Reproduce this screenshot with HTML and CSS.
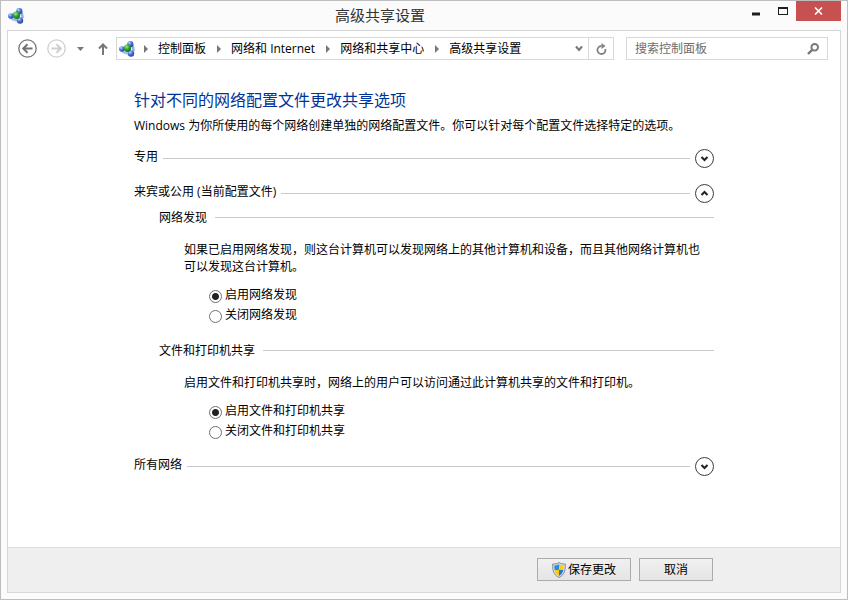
FILE: index.html
```html
<!DOCTYPE html>
<html lang="zh-CN">
<head>
<meta charset="utf-8">
<meta name="viewport" content="width=device-width, initial-scale=1">
<title>高级共享设置</title>
<link rel="stylesheet" href="styles.css">
</head>
<body>
<svg class="defs" aria-hidden="true">
  <defs>
    <radialGradient id="blue" cx=".35" cy=".28" r=".8">
      <stop offset="0" stop-color="#c4d8fb"/>
      <stop offset=".45" stop-color="#4d76dc"/>
      <stop offset="1" stop-color="#1f3aa8"/>
    </radialGradient>
    <radialGradient id="green" cx=".38" cy=".3" r=".8">
      <stop offset="0" stop-color="#a6eb92"/>
      <stop offset=".45" stop-color="#2da52c"/>
      <stop offset="1" stop-color="#0a6a12"/>
    </radialGradient>
    <symbol id="network" viewBox="0 0 16 16">
      <path d="M2.500 8 8 7.500M11 3 9 7M12 12.500 9 8" stroke="#9fb4dd" stroke-width="2"/>
      <path d="M12.500 3.500q2.300 2 2 6.500" fill="none" stroke="#8fade6" stroke-width="2.500"/>
      <path d="M3 9.500q1.500 2.700 6 2.700" fill="none" stroke="#a3bdec" stroke-width="2.500"/>
      <circle cx="11.300" cy="3.200" r="3.100" fill="url(#blue)"/>
      <circle cx="2.900" cy="8" r="2.800" fill="url(#blue)"/>
      <circle cx="12" cy="12.500" r="3.200" fill="url(#blue)"/>
      <circle cx="8.500" cy="7.300" r="3.700" fill="url(#green)"/>
    </symbol>
    <symbol id="chevron" viewBox="0 0 19 19">
      <circle cx="9.500" cy="9.500" r="9" fill="#fff" stroke="#3c3c3c"/>
      <path d="M6.500 8l3 3 3-3" fill="none" stroke="#222" stroke-width="2"/>
    </symbol>
  </defs>
</svg>

<div class="window">
  <header class="titlebar">
    <svg class="app-icon" aria-hidden="true"><use href="#network"/></svg>
    <h1 class="title">高级共享设置</h1>
    <div class="controls">
      <button type="button" class="control" aria-label="最小化">
        <svg width="11" height="10" viewBox="0 0 11 10"><path d="M2 6.500h8v3H2z" fill="#1e1e1e"/></svg>
      </button>
      <button type="button" class="control" aria-label="最大化">
        <svg width="11" height="10" viewBox="0 0 11 10"><path fill-rule="evenodd" d="M1 1h10v8H1zM2 3v5h8V3z" fill="#1e1e1e"/></svg>
      </button>
      <button type="button" class="control close" aria-label="关闭">
        <svg width="9" height="8" viewBox="0 0 9 8"><path d="M1 .5l7 7M8 .5l-7 7" stroke="#fff" stroke-width="1.600"/></svg>
      </button>
    </div>
  </header>

  <div class="frame">
    <div class="toolbar">
      <div class="history">
        <button type="button" class="tool" aria-label="后退">
          <svg width="19" height="19" viewBox="0 0 19 19" fill="none" stroke="#747474"><circle cx="9.500" cy="9.500" r="8.700" stroke-width="1.300"/><path d="M14.500 9.500H5.500M9.500 5.200 5.200 9.500l4.300 4.300" stroke-width="2"/></svg>
        </button>
        <button type="button" class="tool" aria-label="前进">
          <svg width="19" height="19" viewBox="0 0 19 19" fill="none" stroke="#cfcfcf"><circle cx="9.500" cy="9.500" r="8.700" stroke-width="1.300"/><path d="M4.500 9.500h9M9.500 5.200l4.300 4.300-4.300 4.300" stroke-width="2"/></svg>
        </button>
        <button type="button" class="tool recent" aria-label="最近位置">
          <svg width="7" height="4" viewBox="0 0 7 4"><path d="M0 0h7L3.500 4z" fill="#777"/></svg>
        </button>
        <button type="button" class="tool" aria-label="上移">
          <svg width="10" height="12" viewBox="0 0 10 12" fill="none" stroke="#777" stroke-width="2"><path d="M5 12V2M1 5.500l4-4 4 4"/></svg>
        </button>
      </div>
      <div class="address">
        <nav class="crumbs" aria-label="地址">
          <svg class="app-icon" aria-hidden="true"><use href="#network"/></svg>
          <svg class="arrow" viewBox="0 0 4 8"><path d="M0 0v8l4-4z"/></svg>
          <a href="#">控制面板</a>
          <svg class="arrow" viewBox="0 0 4 8"><path d="M0 0v8l4-4z"/></svg>
          <a href="#">网络和 Internet</a>
          <svg class="arrow" viewBox="0 0 4 8"><path d="M0 0v8l4-4z"/></svg>
          <a href="#">网络和共享中心</a>
          <svg class="arrow" viewBox="0 0 4 8"><path d="M0 0v8l4-4z"/></svg>
          <a href="#">高级共享设置</a>
        </nav>
        <button type="button" class="tool history-list" aria-label="以前的位置">
          <svg width="8" height="7" viewBox="0 0 8 7"><path d="M1 1.500l3 3.500 3-3.500" fill="none" stroke="#777" stroke-width="2"/></svg>
        </button>
        <button type="button" class="tool refresh" aria-label="刷新">
          <svg width="11" height="12" viewBox="0 0 11 12"><path d="M5.500 3A4 4 0 1 0 9.300 6" fill="none" stroke="#808080" stroke-width="1.800"/><path d="M5.500 0 9.500 3 5.500 6z" fill="#808080"/></svg>
        </button>
      </div>
      <form class="search">
        <input type="search" placeholder="搜索控制面板" aria-label="搜索控制面板">
        <button type="submit" class="tool" aria-label="搜索">
          <svg width="12" height="12" viewBox="0 0 12 12" fill="none" stroke="#777"><circle cx="7.700" cy="4.300" r="3.300" stroke-width="1.900"/><path d="M5.200 6.800 1 11" stroke-width="2.400"/></svg>
        </button>
      </form>
    </div>

    <main class="content">
      <h2 class="heading">针对不同的网络配置文件更改共享选项</h2>
      <p class="intro">Windows 为你所使用的每个网络创建单独的网络配置文件。你可以针对每个配置文件选择特定的选项。</p>

      <section class="profile">
        <div class="profile-head">
          <h3>专用</h3><span class="rule"></span>
          <button type="button" class="toggle" aria-label="展开 专用" aria-expanded="false"><svg><use href="#chevron"/></svg></button>
        </div>
      </section>

      <section class="profile">
        <div class="profile-head">
          <h3>来宾或公用 (当前配置文件)</h3><span class="rule"></span>
          <button type="button" class="toggle open" aria-label="折叠 来宾或公用" aria-expanded="true"><svg><use href="#chevron"/></svg></button>
        </div>
        <div class="group" role="radiogroup" aria-labelledby="discovery">
          <div class="group-head"><h4 id="discovery">网络发现</h4><span class="rule"></span></div>
          <p>如果已启用网络发现，则这台计算机可以发现网络上的其他计算机和设备，而且其他网络计算机也可以发现这台计算机。</p>
          <div class="options">
            <label><input type="radio" name="discovery" checked><span>启用网络发现</span></label>
            <label><input type="radio" name="discovery"><span>关闭网络发现</span></label>
          </div>
        </div>
        <div class="group" role="radiogroup" aria-labelledby="sharing">
          <div class="group-head"><h4 id="sharing">文件和打印机共享</h4><span class="rule"></span></div>
          <p>启用文件和打印机共享时，网络上的用户可以访问通过此计算机共享的文件和打印机。</p>
          <div class="options">
            <label><input type="radio" name="sharing" checked><span>启用文件和打印机共享</span></label>
            <label><input type="radio" name="sharing"><span>关闭文件和打印机共享</span></label>
          </div>
        </div>
      </section>

      <section class="profile">
        <div class="profile-head">
          <h3>所有网络</h3><span class="rule"></span>
          <button type="button" class="toggle" aria-label="展开 所有网络" aria-expanded="false"><svg><use href="#chevron"/></svg></button>
        </div>
      </section>
    </main>

    <footer class="actions">
      <button type="button" class="button save">
        <svg width="14" height="16" viewBox="0 0 14 16">
          <path d="M7 .5C5.500 1.700 3 2 .7 2 .3 8 1.500 13 7 15.500 12.500 13 13.700 8 13.300 2 11 2 8.500 1.700 7 .5z" fill="#d5d8dc" stroke="#8b8f94"/>
          <path d="M7 2.200C5.500 3 4 3.400 2.400 3.500 2.300 5 2.300 6.500 2.700 8H7z" fill="#2a8be0"/>
          <path d="M7 2.200c1.500.8 3 1.200 4.600 1.300.1 1.500.1 3-.3 4.500H7z" fill="#f8d117"/>
          <path d="M2.700 8C3.200 10.500 4.500 12.500 7 14V8z" fill="#f8c90f"/>
          <path d="M11.300 8C10.800 10.500 9.500 12.500 7 14V8z" fill="#2379d2"/>
        </svg>
        保存更改
      </button>
      <button type="button" class="button cancel">取消</button>
    </footer>
  </div>
</div>
</body>
</html>
```
FILE: styles.css
```css
* {
  box-sizing: border-box;
}

body {
  margin: 0;
  color: #000;
  font: 12px/17px "Open Sans", "Noto Sans CJK SC", sans-serif;
}

h1, h2, h3, h4, p {
  margin: 0;
  font-size: inherit;
  font-weight: normal;
}

button, input {
  font: inherit;
  color: inherit;
}

button {
  padding: 0;
  border: 0;
  background: none;
}

svg {
  display: block;
  flex: none;
}

.defs {
  position: absolute;
  width: 0;
  height: 0;
}

.window {
  display: flex;
  flex-direction: column;
  min-height: 100vh;
  padding: 0 6px 6px;
  border: 1px solid #bebebe;
  background: #fbfbfb;
}

.titlebar {
  display: flex;
  align-items: flex-start;
  height: 29px;
}

.app-icon {
  width: 16px;
  height: 16px;
}

.titlebar .app-icon {
  margin: 7px 0 0 1px;
}

.title {
  flex: 1;
  padding-right: 6px;
  color: #333;
  font-size: 15px;
  line-height: 28px;
  text-align: center;
}

.controls {
  display: flex;
}

.control {
  display: flex;
  align-items: center;
  justify-content: center;
  width: 27px;
  height: 20px;
}

.close {
  width: 45px;
  background: #c75050;
}

.frame {
  display: flex;
  flex: 1;
  flex-direction: column;
  border: 1px solid #d6d6d6;
  background: #fff;
}

.toolbar {
  display: flex;
  align-items: center;
  padding: 6px 12px 0 10px;
}

.history {
  display: flex;
  align-items: center;
  gap: 10px;
  margin-right: 8px;
}

.recent {
  padding: 0 4px 0 1px;
}

.tool {
  display: flex;
  align-items: center;
  justify-content: center;
}

.address, .search {
  display: flex;
  height: 23px;
  border: 1px solid #d9d9d9;
}

.address {
  flex: 1;
  margin-right: 12px;
}

.crumbs {
  display: flex;
  flex: 1;
  align-items: center;
  padding-left: 2px;
}

.crumbs a {
  color: inherit;
  text-decoration: none;
  white-space: nowrap;
}

.arrow {
  width: 4px;
  height: 8px;
  margin: 0 10px 0 11px;
  fill: #777;
}

.app-icon + .arrow {
  margin-left: 9px;
}

.history-list {
  width: 18px;
}

.refresh {
  width: 25px;
  border-left: 1px solid #d9d9d9;
}

.search {
  width: 202px;
  padding: 0 8px;
}

.search input {
  flex: 1;
  min-width: 0;
  padding: 0;
  border: 0;
  outline: 0;
  background: none;
  appearance: none;
}

.search input::placeholder {
  color: #6d6d6d;
}

.content {
  flex: 1;
  width: 100%;
  max-width: 580px;
  margin: 0 auto;
  padding: 30px 0;
}

.heading {
  color: #003399;
  font-size: 16px;
  line-height: 20px;
}

.intro {
  margin: 7px 0 14px;
}

.profile {
  margin-bottom: 14px;
}

.profile-head, .group-head {
  display: flex;
  align-items: center;
}

.profile-head {
  gap: 5px;
}

.profile-head h3 {
  padding-bottom: 4px;
}

.rule {
  flex: 1;
  height: 1px;
  background: #cacaca;
}

.toggle svg {
  width: 19px;
  height: 19px;
}

.toggle.open svg {
  transform: rotate(180deg);
}

.group {
  padding-left: 25px;
}

.group-head {
  gap: 8px;
  padding-top: 5px;
}

.group p {
  padding: 15px 12px 11px 25px;
}

.options {
  padding: 0 0 11px 50px;
}

.group:last-child .options {
  padding-bottom: 0;
}

.options label {
  display: flex;
  align-items: center;
  gap: 3px;
  height: 20px;
}

.options span {
  padding-bottom: 4px;
}

.options input {
  width: 13px;
  height: 13px;
  margin: 0;
  border: 1px solid #707070;
  border-radius: 50%;
  background: #fff;
  appearance: none;
}

.options input:checked {
  background: radial-gradient(circle, #222 3px, #fff 4px);
}

.actions {
  display: flex;
  justify-content: flex-end;
  gap: 8px;
  padding: 10px 127px 11px;
  border-top: 1px solid #dfdfdf;
  background: #efefef;
}

.button {
  display: flex;
  align-items: center;
  justify-content: center;
  gap: 2px;
  height: 23px;
  border: 1px solid #acacac;
  background: linear-gradient(#f0f0f0, #e5e5e5);
}

.save {
  width: 94px;
}

.cancel {
  width: 74px;
}
```
